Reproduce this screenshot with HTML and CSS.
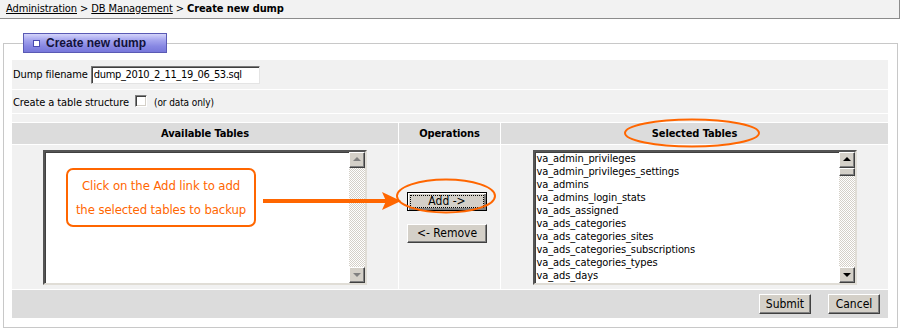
FILE: index.html
```html
<!DOCTYPE html>
<html lang="en">
<head>
  <meta charset="UTF-8">
  <title>Create new dump</title>
  <link rel="stylesheet" href="styles.css">
</head>
<body>
<div class="page">
  <div class="crumbs">
    <a href="#">Administration</a> &gt; <a href="#">DB Management</a> &gt; <b>Create new dump</b>
  </div>

  <fieldset class="panel">
    <legend class="panel-title"><span class="bullet"></span>Create new dump</legend>

    <table class="dump-form">
      <colgroup>
        <col class="col-side">
        <col class="col-ops">
        <col>
      </colgroup>
      <tr class="row-file">
        <td colspan="3">
          <label for="filename">Dump filename</label>
          <input id="filename" class="text-input" type="text" value="dump_2010_2_11_19_06_53.sql">
        </td>
      </tr>
      <tr class="row-struct">
        <td colspan="3">
          Create a table structure
          <input class="check" type="checkbox">
          <span class="hint">(or data only)</span>
        </td>
      </tr>
      <tr class="row-spacer"><td colspan="3"></td></tr>
      <tr class="row-head">
        <th>Available Tables</th>
        <th>Operations</th>
        <th>Selected Tables</th>
      </tr>
      <tr class="row-lists">
        <td>
          <div class="listbox">
            <ul class="items"></ul>
            <div class="scrollbar">
              <span class="arrow up off"></span>
              <span class="track"></span>
              <span class="arrow down off"></span>
            </div>
          </div>
        </td>
        <td class="ops">
          <button class="btn btn-focus" type="button"><span>Add -&gt;</span></button>
          <button class="btn" type="button">&lt;- Remove</button>
        </td>
        <td>
          <div class="listbox">
            <ul class="items">
              <li>va_admin_privileges</li>
              <li>va_admin_privileges_settings</li>
              <li>va_admins</li>
              <li>va_admins_login_stats</li>
              <li>va_ads_assigned</li>
              <li>va_ads_categories</li>
              <li>va_ads_categories_sites</li>
              <li>va_ads_categories_subscriptions</li>
              <li>va_ads_categories_types</li>
              <li>va_ads_days</li>
            </ul>
            <div class="scrollbar">
              <span class="arrow up"></span>
              <span class="thumb"></span>
              <span class="track"></span>
              <span class="arrow down"></span>
            </div>
          </div>
        </td>
      </tr>
      <tr class="row-actions">
        <td colspan="3">
          <button class="btn btn-small" type="submit">Submit</button>
          <button class="btn btn-small" type="button">Cancel</button>
        </td>
      </tr>
    </table>
  </fieldset>

  <!-- annotations drawn over the screenshot -->
  <div class="callout">Click on the Add link to add<br>the selected tables to backup</div>
  <svg class="marks" width="900" height="328" viewBox="0 0 900 328">
    <ellipse cx="692" cy="133" rx="67" ry="13.5" fill="none" stroke="#f60" stroke-width="2"/>
    <ellipse cx="446" cy="196" rx="49" ry="16.5" fill="none" stroke="#f60" stroke-width="2"/>
    <path d="M263 201 H386" stroke="#f60" stroke-width="4" fill="none"/>
    <path d="M382 192 L401 201 L382 210 L386 201 Z" fill="#f60"/>
  </svg>
</div>
</body>
</html>
```

FILE: styles.css
```css
:root {
  --light: #f1f1f1;
  --head: #dcdcdc;
  --face: #d4d0c8;
  --orange: #f60;
}

* {
  box-sizing: border-box;
}

body {
  margin: 0;
  background: #fff;
  color: #000;
  font-family: 'DejaVu Sans Condensed', 'Liberation Sans', sans-serif;
  font-size: 11px;
  letter-spacing: -0.1px;
}

.page {
  position: relative;
  width: 900px;
  height: 328px;
  overflow: hidden;
}

.crumbs {
  height: 19px;
  padding: 2px 0 0 6px;
  background: #f2f2f2;
  border-bottom: 1px solid #8c8c8c;
  border-right: 1px solid #8c8c8c;
  line-height: 14px;
}

.crumbs a {
  color: #000;
}

.panel {
  margin: 14px 2px 0 3px;
  padding: 6px 8px 8px 7px;
  border: 1px solid #c8c8c8;
  min-width: 0;
}

.panel-title {
  margin-left: 12px;
  padding: 0 20px 0 9px;
  height: 20px;
  line-height: 18px;
  border: 1px solid #5a5ab4;
  background: linear-gradient(#d4d4fa 0%, #a4a4ee 35%, #8686e2 70%, #7878da 100%);
  color: #12123a;
  font-weight: bold;
  font-size: 12px;
  letter-spacing: 0;
  font-family: 'Liberation Sans', sans-serif;
  display: flex;
  align-items: center;
}

.bullet {
  width: 7px;
  height: 7px;
  margin-right: 6px;
  background: #fff;
  border: 1px solid #4a4ab0;
}

.dump-form {
  width: 100%;
  border-spacing: 1px;
  border-collapse: separate;
  table-layout: fixed;
}

.dump-form .col-side {
  width: 386px;
}

.dump-form .col-ops {
  width: 101px;
}

.dump-form td,
.dump-form th {
  padding: 0;
  background: var(--light);
}

.row-file td {
  height: 29px;
  padding-left: 1px;
}

.text-input {
  width: 169px;
  height: 18px;
  margin: 0;
  padding: 0 0 1px 2px;
  border: 1px solid;
  border-color: #7a7a7a #e4e4e4 #e4e4e4 #7a7a7a;
  box-shadow: inset 1px 1px 0 #404040;
  font: 11px/15px 'DejaVu Sans Condensed', 'Liberation Sans', sans-serif;
  letter-spacing: -0.35px;
  vertical-align: middle;
}

.row-struct td {
  height: 23px;
  padding-left: 1px;
}

.check {
  appearance: none;
  width: 12px;
  height: 12px;
  margin: 0 4px 0 3px;
  border: 1px solid;
  border-color: #808080 #fff #fff #808080;
  box-shadow: inset 1px 1px 0 #404040, inset -1px -1px 0 var(--face);
  background: #fff;
  vertical-align: -1px;
}

.hint {
  font-size: 10px;
}

.row-spacer td {
  height: 8px;
}

.row-head th {
  height: 21px;
  background: var(--head);
  font-weight: bold;
}

.row-lists td {
  height: 144px;
  vertical-align: middle;
}

.listbox {
  display: flex;
  width: 324px;
  height: 135px;
  margin: 0 auto;
  background: #fff;
  border: 2px solid;
  border-color: #555 #e0ddd6 #e0ddd6 #555;
  box-shadow: inset 1px 1px 0 #404040;
}

.items {
  flex: 1;
  margin: 0;
  padding: 0 0 0 2px;
  list-style: none;
  line-height: 13px;
}

.scrollbar {
  display: flex;
  flex-direction: column;
  flex: none;
  width: 16px;
  background: repeating-conic-gradient(#d4d0c8 0 25%, #fff 0 50%) 0 0 / 2px 2px;
}

.arrow,
.thumb {
  display: block;
  height: 16px;
  background: var(--face);
  border: 1px solid;
  border-color: #fff #404040 #404040 #fff;
  box-shadow: inset -1px -1px 0 #808080;
  position: relative;
}

.thumb {
  height: 8px;
}

.track {
  flex: 1;
}

.arrow::after {
  content: '';
  position: absolute;
  left: 3px;
  border-left: 4px solid transparent;
  border-right: 4px solid transparent;
}

.arrow.up::after {
  top: 4px;
  border-bottom: 4px solid #000;
}

.arrow.down::after {
  top: 5px;
  border-top: 4px solid #000;
}

.arrow.off.up::after {
  border-bottom-color: #808080;
}

.arrow.off.down::after {
  border-top-color: #808080;
}

.ops {
  text-align: center;
}

.btn {
  display: block;
  width: 80px;
  height: 19px;
  margin: 0 0 0 8px;
  padding: 0;
  background: var(--face);
  border: 1px solid;
  border-color: #fff #404040 #404040 #fff;
  box-shadow: inset -1px -1px 0 #808080;
  font: 12px 'DejaVu Sans Condensed', 'Liberation Sans', sans-serif;
  color: #000;
}

.btn + .btn {
  margin-top: 13px;
}

.btn-focus {
  border: 1px solid #000;
  box-shadow: inset 1px 1px 0 #fff, inset -2px -2px 0 #808080;
  padding: 3px;
}

.btn-focus span {
  display: block;
  height: 100%;
  line-height: 11px;
  outline: 1px dotted #000;
}

.row-actions td {
  height: 28px;
  background: var(--head);
  text-align: right;
  padding-right: 8px;
}

.btn-small {
  display: inline-block;
  width: 52px;
  height: 20px;
  margin: 0 0 0 14px;
}

.btn + .btn-small {
  margin-top: 0;
}

.callout {
  position: absolute;
  left: 66px;
  top: 168px;
  width: 190px;
  height: 59px;
  padding-top: 4px;
  border: 2px solid var(--orange);
  border-radius: 7px;
  background: #fff;
  color: var(--orange);
  font-size: 13px;
  line-height: 24px;
  text-align: center;
}

.marks {
  position: absolute;
  left: 0;
  top: 0;
  pointer-events: none;
}
```
